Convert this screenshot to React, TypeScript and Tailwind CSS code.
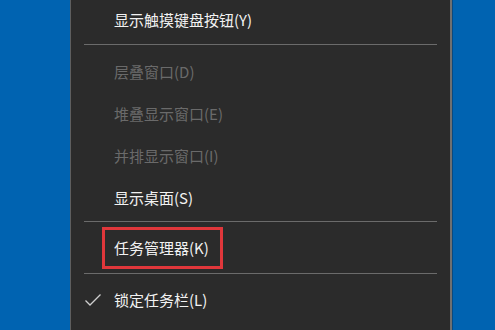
import React from "react";

type Item = { label: string; disabled?: boolean; checked?: boolean; boxed?: boolean };

const FONT = { fontFamily: '"Noto Sans CJK SC", "Noto Sans", sans-serif' };

function Row({ item, h }: { item: Item; h: string }) {
  const color = item.disabled ? "text-[#6a6a6a]" : "text-[#f2f2f2]";
  return (
    <div className={`relative flex items-center ${h}`}>
      {item.checked && (
        <svg className="absolute left-[13px] top-1/2 -translate-y-1/2" width="18" height="14" viewBox="0 0 18 14">
          <path d="M1.5 7.5 L6 12 L16.5 1.5" fill="none" stroke="#cfcfcf" strokeWidth="1.3" />
        </svg>
      )}
      {item.boxed ? (
        <div className="ml-[31px] flex h-full w-[121px] items-center border-[3px] border-[#e0373b] pl-[9px]">
          <span className={`text-[15px] ${color}`}>{item.label}</span>
        </div>
      ) : (
        <span className={`ml-[43px] text-[15px] ${color}`}>{item.label}</span>
      )}
    </div>
  );
}

function Sep({ className }: { className: string }) {
  return <div className={`ml-[13px] mr-[13px] h-px bg-[#6b6b6b] ${className}`} />;
}

export default function App() {
  return (
    <div className="flex h-[330px] w-[495px] overflow-hidden bg-[#0063b1]" style={FONT}>
      <div className="w-[70px] shrink-0" />
      <div className="flex w-[382px] shrink-0 flex-col border-l border-r-2 border-l-[#5e5e5e] border-r-[#707070] bg-[#2b2b2b]">
        <Row item={{ label: "显示触摸键盘按钮(Y)" }} h="h-[40px]" />
        <Sep className="mt-[4px] mb-[6px]" />
        <Row item={{ label: "层叠窗口(D)", disabled: true }} h="h-[42px]" />
        <Row item={{ label: "堆叠显示窗口(E)", disabled: true }} h="h-[42px]" />
        <Row item={{ label: "并排显示窗口(I)", disabled: true }} h="h-[42px]" />
        <Row item={{ label: "显示桌面(S)" }} h="h-[42px]" />
        <Sep className="mt-[2px] mb-[5px]" />
        <Row item={{ label: "任务管理器(K)", boxed: true }} h="h-[42px]" />
        <Sep className="mt-[4px] mb-[5px]" />
        <Row item={{ label: "锁定任务栏(L)", checked: true }} h="h-[42px]" />
      </div>
      <div className="flex-1 border-l border-[#0a4a80]" />
    </div>
  );
}
